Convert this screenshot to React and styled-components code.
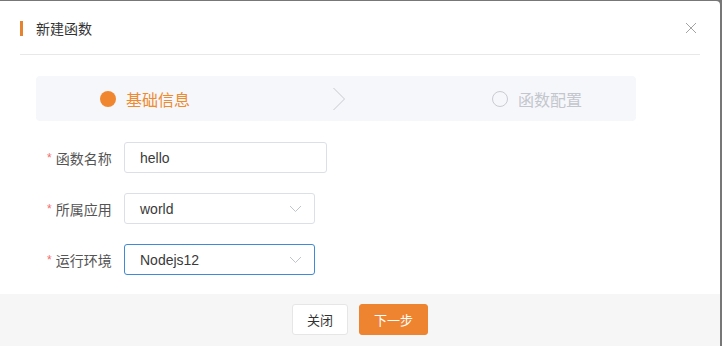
import React from "react";
import styled, { createGlobalStyle } from "styled-components";

const GlobalStyle = createGlobalStyle`
  html, body {
    margin: 0;
    padding: 0;
    background: #777;
    font-family: "Liberation Sans", "Noto Sans CJK SC", sans-serif;
    overflow: hidden;
  }
`;

const Dialog = styled.div`
  width: 720px;
  height: 345px;
  margin-top: 1px;
  background: #fff;
  border-top-right-radius: 4px;
  display: flex;
  flex-direction: column;
`;

const Header = styled.div`
  margin: 0 20px 0 20px;
  height: 52px;
  border-bottom: 1px solid #e8e8e8;
  display: flex;
  align-items: center;
  padding-top: 1px;
`;

const TitleBar = styled.span`
  width: 3px;
  height: 15px;
  background: #e5832f;
  margin-right: 13px;
`;

const Title = styled.h1`
  margin: 0;
  flex: 1;
  font-size: 14px;
  font-weight: normal;
  color: #333;
`;

const Close = styled.button`
  border: 0;
  background: none;
  padding: 0;
  margin-right: 3px;
  width: 12px;
  height: 12px;
  display: flex;
  color: #a3a3a3;
`;

const Body = styled.div`
  flex: 1;
  padding: 21px 36px 0 36px;
`;

const Steps = styled.div`
  width: 600px;
  height: 45px;
  box-sizing: border-box;
  padding-left: 64px;
  background: #f6f7fb;
  border-radius: 4px;
  display: flex;
  align-items: center;
`;

const Step = styled.div`
  display: flex;
  align-items: center;
  gap: 10px;
  font-size: 16px;
  color: ${(p) => (p.active ? "#ef8a2e" : "#c3c6cc")};
`;

const Dot = styled.span`
  box-sizing: border-box;
  width: 16px;
  height: 16px;
  border-radius: 50%;
  background: ${(p) => (p.active ? "#f08730" : "transparent")};
  border: ${(p) => (p.active ? "none" : "1px solid #c8cbd1")};
`;

const Arrow = styled.svg`
  margin: 0 147px 0 143px;
`;

const Form = styled.div`
  display: flex;
  flex-direction: column;
  gap: 20px;
  margin-top: 21px;
`;

const Row = styled.div`
  display: flex;
  align-items: center;
`;

const Label = styled.label`
  width: 88px;
  padding-left: 11px;
  box-sizing: border-box;
  font-size: 14px;
  color: #555;
  display: flex;
  align-items: center;

  &::before {
    content: "*";
    color: #f56c6c;
    margin-right: 4px;
    font-size: 12px;
  }
`;

const Field = styled.div`
  box-sizing: border-box;
  width: ${(p) => p.w}px;
  height: 31px;
  border: 1px solid ${(p) => (p.focus ? "#3e8ad6" : "#dcdfe6")};
  border-radius: 3px;
  display: flex;
  align-items: center;
  padding: 0 12px 0 15px;
  font-size: 14px;
  color: #3a3a3a;
`;

const Value = styled.span`
  flex: 1;
`;

const Footer = styled.div`
  height: 52px;
  background: #f6f6f6;
  display: flex;
  justify-content: center;
  align-items: flex-start;
  gap: 11px;
  padding-top: 10px;
  box-sizing: border-box;
`;

const Button = styled.button`
  height: 31px;
  padding: 0 14px;
  border-radius: 3px;
  font-family: inherit;
  font-size: 13px;
  border: 1px solid ${(p) => (p.primary ? "#ef8430" : "#e6e6e6")};
  background: ${(p) => (p.primary ? "#ef8430" : "#fff")};
  color: ${(p) => (p.primary ? "#fff" : "#333")};
`;

const Chevron = () => (
  <svg width="13" height="8" viewBox="0 0 13 8">
    <path d="M1 1l5.5 5.5L12 1" fill="none" stroke="#c0c4cc" strokeWidth="1" />
  </svg>
);

export default function App() {
  return (
    <>
      <GlobalStyle />
      <Dialog>
        <Header>
          <TitleBar />
          <Title>新建函数</Title>
          <Close aria-label="close">
            <svg width="12" height="12" viewBox="0 0 12 12">
              <path d="M1 1l10 10M11 1L1 11" stroke="currentColor" strokeWidth="1" />
            </svg>
          </Close>
        </Header>
        <Body>
          <Steps>
            <Step active>
              <Dot active />
              基础信息
            </Step>
            <Arrow width="12" height="24" viewBox="0 0 12 24">
              <path d="M0.5 1l11 11-11 11" fill="none" stroke="#c6c9cf" strokeWidth="1" />
            </Arrow>
            <Step>
              <Dot />
              函数配置
            </Step>
          </Steps>
          <Form>
            <Row>
              <Label>函数名称</Label>
              <Field w={203}>
                <Value>hello</Value>
              </Field>
            </Row>
            <Row>
              <Label>所属应用</Label>
              <Field w={191}>
                <Value>world</Value>
                <Chevron />
              </Field>
            </Row>
            <Row>
              <Label>运行环境</Label>
              <Field w={191} focus>
                <Value>Nodejs12</Value>
                <Chevron />
              </Field>
            </Row>
          </Form>
        </Body>
        <Footer>
          <Button>关闭</Button>
          <Button primary>下一步</Button>
        </Footer>
      </Dialog>
    </>
  );
}
